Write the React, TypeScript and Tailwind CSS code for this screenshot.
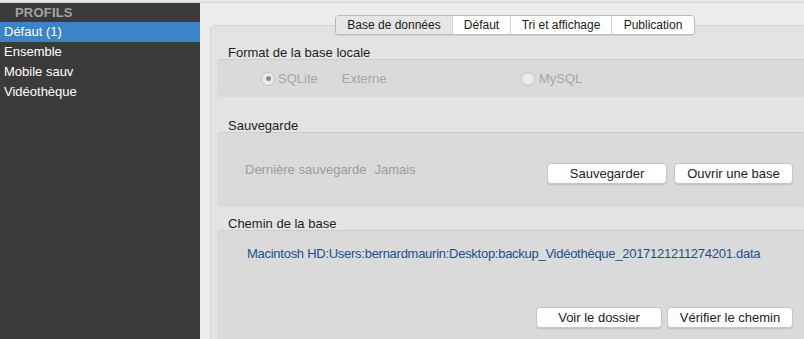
import React from "react";

const font = { fontFamily: '"Liberation Sans", Arial, sans-serif' };

function Radio({ checked }: { checked?: boolean }) {
  return (
    <span className="w-[14px] h-[14px] rounded-full border border-[#c4c4c4] bg-[#ebebeb] flex items-center justify-center shrink-0">
      {checked && <span className="w-[5px] h-[5px] rounded-full bg-[#8c8c8c]" />}
    </span>
  );
}

function Button({ label, width }: { label: string; width: string }) {
  return (
    <button
      className={`${width} h-[21px] rounded-[4px] bg-white border border-[#c6c6c6] shadow-[0_1px_1px_rgba(0,0,0,0.12)] text-[13px] text-[#222] leading-none flex items-center justify-center`}
    >
      {label}
    </button>
  );
}

const tabs = [
  { label: "Base de données", w: "w-[116px]", active: true },
  { label: "Défaut", w: "w-[58px]" },
  { label: "Tri et affichage", w: "w-[101px]" },
  { label: "Publication", w: "w-[83px]" },
];

export default function App() {
  return (
    <div style={font} className="w-[804px] h-[339px] overflow-hidden flex flex-col bg-[#ececec]">
      <div className="h-[3px] bg-[#e9e9e9] border-b border-[#d4d4d4] shrink-0" />
      <div className="flex flex-1 min-h-0">
        {/* sidebar */}
        <aside className="w-[200px] bg-[#3b3b3b] shrink-0">
          <div className="h-[19px] pl-[15px] flex items-center text-[13px] font-bold text-[#a3a3a3] tracking-[0.2px]">
            PROFILS
          </div>
          <div className="h-5 bg-[#3d83c7] pl-[4px] flex items-center text-[13px] text-white">Défaut (1)</div>
          <div className="h-5 pl-[4px] flex items-center text-[13px] text-white">Ensemble</div>
          <div className="h-5 pl-[4px] flex items-center text-[13px] text-white">Mobile sauv</div>
          <div className="h-5 pl-[4px] flex items-center text-[13px] text-white">Vidéothèque</div>
        </aside>

        {/* main */}
        <main className="flex-1 pl-[10px] pt-[12px] overflow-hidden">
          <div className="w-[610px]">
            <div className="relative z-10 flex justify-center -mb-[10px]">
              <div className="flex h-5 rounded-[4px] border border-[#b9b9b9] bg-white overflow-hidden shadow-[0_1px_1px_rgba(0,0,0,0.08)]">
                {tabs.map((t, i) => (
                  <div
                    key={t.label}
                    className={`${t.w} ${t.active ? "bg-[#e6e6e6]" : "bg-white"} ${i > 0 ? "border-l border-[#d2d2d2]" : ""} flex items-center justify-center text-[12px] text-[#1a1a1a] leading-none`}
                  >
                    {t.label}
                  </div>
                ))}
              </div>
            </div>

            <div className="h-[330px] rounded-[5px] border border-[#d3d3d3] bg-[#e3e3e3] px-[6px] pt-[19px]">
              <div className="pl-[11px] text-[13px] text-[#1e1e1e] leading-[15px]">Format de la base locale</div>
              <div className="mt-[-1px] h-[38px] rounded-[4px] border-t border-[#cdcdcd] bg-[#dadada] flex items-center pl-[44px] text-[13px] text-[#a6a6a6]">
                <div className="w-[260px] flex items-center">
                  <Radio checked />
                  <span className="ml-[3px]">SQLite</span>
                  <span className="ml-[24px]">Externe</span>
                </div>
                <div className="flex items-center">
                  <Radio />
                  <span className="ml-[4px]">MySQL</span>
                </div>
              </div>

              <div className="mt-[21px] pl-[11px] text-[13px] text-[#1e1e1e] leading-[15px]">Sauvegarde</div>
              <div className="mt-[-1px] h-[75px] rounded-[4px] border-t border-[#cdcdcd] bg-[#dadada] flex items-center pl-[28px] pr-[20px] text-[13px] text-[#9c9c9c]">
                <span>Dernière sauvegarde</span>
                <span className="ml-[8px]">Jamais</span>
                <div className="ml-auto flex gap-[7px] pt-[6px]">
                  <Button label="Sauvegarder" width="w-[120px]" />
                  <Button label="Ouvrir une base" width="w-[119px]" />
                </div>
              </div>

              <div className="mt-[9px] pl-[11px] text-[13px] text-[#1e1e1e] leading-[15px]">Chemin de la base</div>
              <div className="mt-[-1px] h-[120px] rounded-[4px] border-t border-[#cdcdcd] bg-[#dadada] pl-[30px] pr-[20px] pt-[15px]">
                <div className="text-[13px] tracking-[-0.27px] text-[#1e4f8c] leading-[15px]">
                  Macintosh HD:Users:bernardmaurin:Desktop:backup_Vidéothèque_2017121211274201.data
                </div>
                <div className="mt-[46px] flex justify-end gap-[5px]">
                  <Button label="Voir le dossier" width="w-[126px]" />
                  <Button label="Vérifier le chemin" width="w-[126px]" />
                </div>
              </div>
            </div>
          </div>
        </main>
      </div>
    </div>
  );
}
